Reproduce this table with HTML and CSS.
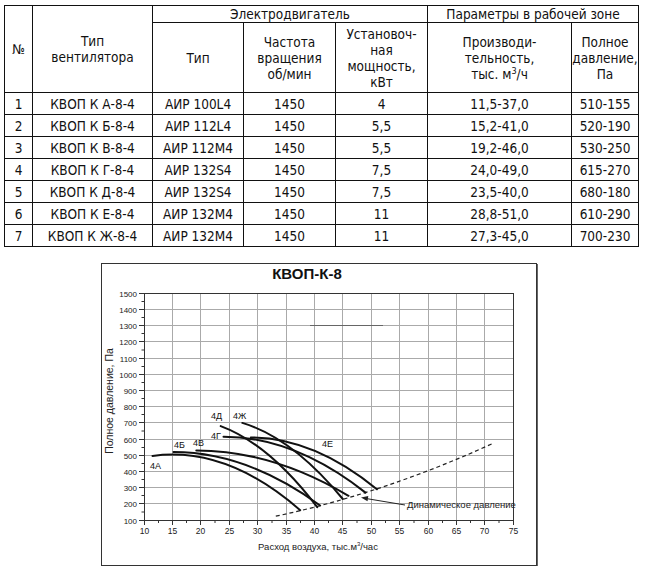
FILE: index.html
```html
<!DOCTYPE html>
<html lang="ru">
<head>
<meta charset="utf-8">
<title>КВОП-К-8</title>
<link rel="stylesheet" href="styles.css">
</head>
<body>
<table class="spec">
  <colgroup>
    <col class="c-num"><col class="c-fan"><col class="c-motor"><col class="c-freq"><col class="c-pow"><col class="c-flow"><col class="c-press">
  </colgroup>
  <thead>
    <tr class="r-h1">
      <th rowspan="2">№</th>
      <th rowspan="2">Тип<br>вентилятора</th>
      <th colspan="3">Электродвигатель</th>
      <th colspan="2">Параметры в рабочей зоне</th>
    </tr>
    <tr class="r-h2">
      <th>Тип</th>
      <th>Частота<br>вращения<br>об/мин</th>
      <th>Установоч-<br>ная<br>мощность,<br>кВт</th>
      <th>Производи-<br>тельность,<br>тыс. м<span class="sup">3</span>/ч</th>
      <th>Полное<br>давление,<br>Па</th>
    </tr>
  </thead>
  <tbody>
    <tr><td>1</td><td>КВОП К А-8-4</td><td>АИР 100L4</td><td>1450</td><td>4</td><td>11,5-37,0</td><td>510-155</td></tr>
    <tr><td>2</td><td>КВОП К Б-8-4</td><td>АИР 112L4</td><td>1450</td><td>5,5</td><td>15,2-41,0</td><td>520-190</td></tr>
    <tr><td>3</td><td>КВОП К В-8-4</td><td>АИР 112М4</td><td>1450</td><td>5,5</td><td>19,2-46,0</td><td>530-250</td></tr>
    <tr><td>4</td><td>КВОП К Г-8-4</td><td>АИР 132S4</td><td>1450</td><td>7,5</td><td>24,0-49,0</td><td>615-270</td></tr>
    <tr><td>5</td><td>КВОП К Д-8-4</td><td>АИР 132S4</td><td>1450</td><td>7,5</td><td>23,5-40,0</td><td>680-180</td></tr>
    <tr><td>6</td><td>КВОП К Е-8-4</td><td>АИР 132М4</td><td>1450</td><td>11</td><td>28,8-51,0</td><td>610-290</td></tr>
    <tr><td>7</td><td>КВОП К Ж-8-4</td><td>АИР 132М4</td><td>1450</td><td>11</td><td>27,3-45,0</td><td>700-230</td></tr>
  </tbody>
</table>

<div class="chart">
  <svg class="plot" width="434" height="301" viewBox="102 263 434 301" xmlns="http://www.w3.org/2000/svg">
    <text class="title" x="307" y="278">КВОП-К-8</text>

    <path class="grid" d="M172.5 292.5V519.5M200.5 292.5V519.5M229.5 292.5V519.5M257.5 292.5V519.5M286.5 292.5V519.5M314.5 292.5V519.5M342.5 292.5V519.5M371.5 292.5V519.5M399.5 292.5V519.5M428.5 292.5V519.5M456.5 292.5V519.5M484.5 292.5V519.5
      M144.5 308.5H513.5M144.5 324.5H513.5M144.5 340.5H513.5M144.5 357.5H513.5M144.5 373.5H513.5M144.5 389.5H513.5M144.5 405.5H513.5M144.5 421.5H513.5M144.5 438.5H513.5M144.5 454.5H513.5M144.5 470.5H513.5M144.5 486.5H513.5M144.5 502.5H513.5"/>
    <path class="grid-dark" d="M310 324.5H383"/>
    <rect class="frame" x="144.5" y="292.5" width="369" height="227"/>

    <path class="tick" d="M139 292.5H144.5M139 308.5H144.5M139 324.5H144.5M139 340.5H144.5M139 357.5H144.5M139 373.5H144.5M139 389.5H144.5M139 405.5H144.5M139 421.5H144.5M139 438.5H144.5M139 454.5H144.5M139 470.5H144.5M139 486.5H144.5M139 502.5H144.5M139 519.5H144.5
      M141.5 300.5H144.5M141.5 316.5H144.5M141.5 332.5H144.5M141.5 349H144.5M141.5 365.5H144.5M141.5 381.5H144.5M141.5 397.5H144.5M141.5 413.5H144.5M141.5 430H144.5M141.5 446.5H144.5M141.5 462.5H144.5M141.5 478.5H144.5M141.5 494.5H144.5M141.5 511H144.5
      M144.5 519.5V524M172.5 519.5V524M200.5 519.5V524M229.5 519.5V524M257.5 519.5V524M286.5 519.5V524M314.5 519.5V524M342.5 519.5V524M371.5 519.5V524M399.5 519.5V524M428.5 519.5V524M456.5 519.5V524M484.5 519.5V524M513.5 519.5V524
      M158.5 519.5V522M186.5 519.5V522M215 519.5V522M243.5 519.5V522M272 519.5V522M300.5 519.5V522M328.5 519.5V522M357 519.5V522M385.5 519.5V522M414 519.5V522M442.5 519.5V522M470.5 519.5V522M499 519.5V522"/>

    <g class="ylab">
      <text x="137" y="295.5">1500</text>
      <text x="137" y="311.5">1400</text>
      <text x="137" y="327.5">1300</text>
      <text x="137" y="343.5">1200</text>
      <text x="137" y="360.5">1100</text>
      <text x="137" y="376.5">1000</text>
      <text x="137" y="392.5">900</text>
      <text x="137" y="408.5">800</text>
      <text x="137" y="424.5">700</text>
      <text x="137" y="441.5">600</text>
      <text x="137" y="457.5">500</text>
      <text x="137" y="473.5">400</text>
      <text x="137" y="489.5">300</text>
      <text x="137" y="505.5">200</text>
      <text x="137" y="522.5">100</text>
    </g>
    <g class="xlab">
      <text x="144.5" y="533">10</text>
      <text x="172.5" y="533">15</text>
      <text x="200.5" y="533">20</text>
      <text x="229.5" y="533">25</text>
      <text x="257.5" y="533">30</text>
      <text x="286.5" y="533">35</text>
      <text x="314.5" y="533">40</text>
      <text x="342.5" y="533">45</text>
      <text x="371.5" y="533">50</text>
      <text x="399.5" y="533">55</text>
      <text x="428.5" y="533">60</text>
      <text x="456.5" y="533">65</text>
      <text x="484.5" y="533">70</text>
      <text x="513.5" y="533">75</text>
    </g>

    <text class="axis-title" x="318" y="549">Расход воздуха, тыс.м<tspan class="sup-svg" dy="-4">3</tspan><tspan dy="4">/час</tspan></text>
    <text class="axis-title y-title" transform="rotate(-90 113 400)" x="113" y="400">Полное давление, Па</text>

    <path class="dyn" d="M275.8 515.2Q383.7 492.2 491.6 443"/>

    <path class="curve" d="M152.5 454.9Q226.4 444.8 300.2 509.2"/>
    <path class="curve" d="M173.5 451.1Q246.8 451.1 320.1 504.5"/>
    <path class="curve" d="M196.3 449.4Q272.4 449.4 348.5 494.8"/>
    <path class="curve" d="M223.5 435.7Q294.5 435.7 365.5 491.6"/>
    <path class="curve" d="M250.8 436.5Q313.8 436.5 376.9 488.3"/>
    <path class="curve" d="M220.7 425.1Q269 443 317.2 506.1"/>
    <path class="curve" d="M242.3 421.9Q292.5 436.8 342.8 498"/>

    <g class="clab">
      <text x="150" y="468">4А</text>
      <text x="174" y="447">4Б</text>
      <text x="193" y="445">4В</text>
      <text x="211" y="438">4Г</text>
      <text x="211" y="418">4Д</text>
      <text x="233" y="418">4Ж</text>
      <text x="322" y="446">4Е</text>
    </g>

    <path class="arrow-line" d="M405 504L366 497.5"/>
    <polygon class="arrow-head" points="361,496.5 368.3,495 367.5,500.3"/>
    <text class="note" x="407" y="507">Динамическое давление</text>
  </svg>
</div>
</body>
</html>
```

FILE: styles.css
```css
html, body {
  margin: 0;
  padding: 0;
  background: #fff;
}

body {
  font-family: "DejaVu Sans", Verdana, sans-serif;
  color: #111;
}

.spec {
  border-collapse: collapse;
  table-layout: fixed;
  width: 635px;
  margin: 5px 0 0 4px;
  font-family: "DejaVu Sans Condensed", "DejaVu Sans", sans-serif;
  font-stretch: condensed;
  font-size: 13.5px;
  line-height: 16px;
}

.c-num { width: 28px; }
.c-fan { width: 120px; }
.c-motor { width: 91px; }
.c-freq { width: 92px; }
.c-pow { width: 92px; }
.c-flow { width: 144px; }
.c-press { width: 67px; }

.spec th,
.spec td {
  border: 1px solid #111;
  padding: 0;
  text-align: center;
  vertical-align: middle;
  font-weight: normal;
  white-space: nowrap;
}

.spec .r-h1 { height: 17px; }
.spec .r-h2 { height: 70px; }
.spec tbody tr { height: 22px; }

.sup {
  font-size: 9px;
  vertical-align: 5px;
  line-height: 0;
}

.chart {
  width: 434px;
  height: 301px;
  margin: 16px 0 0 101px;
  border: 1px solid #333;
  box-shadow: 1px 1px 0 #666;
}

.plot {
  display: block;
  font-family: "Liberation Sans", Arial, sans-serif;
}

.title {
  font-size: 15px;
  font-weight: bold;
  text-anchor: middle;
  fill: #111;
}

.grid {
  fill: none;
  stroke: #aaa;
  stroke-width: 1;
}

.grid-dark {
  fill: none;
  stroke: #666;
  stroke-width: 1;
}

.frame {
  fill: none;
  stroke: #333;
  stroke-width: 1;
}

.tick {
  fill: none;
  stroke: #333;
  stroke-width: 1;
}

.ylab text {
  font-size: 8px;
  text-anchor: end;
  fill: #222;
}

.xlab text {
  font-size: 8.5px;
  text-anchor: middle;
  fill: #222;
}

.axis-title {
  font-size: 9.5px;
  text-anchor: middle;
  fill: #222;
}

.y-title {
  font-size: 10.5px;
}

.sup-svg {
  font-size: 6px;
}

.curve {
  fill: none;
  stroke: #111;
  stroke-width: 2;
  stroke-linecap: round;
}

.dyn {
  fill: none;
  stroke: #222;
  stroke-width: 1.2;
  stroke-dasharray: 4 3;
}

.clab text {
  font-size: 9px;
  fill: #111;
}

.arrow-line {
  fill: none;
  stroke: #222;
  stroke-width: 1;
}

.arrow-head {
  fill: #222;
}

.note {
  font-size: 9.5px;
  fill: #222;
}
```
